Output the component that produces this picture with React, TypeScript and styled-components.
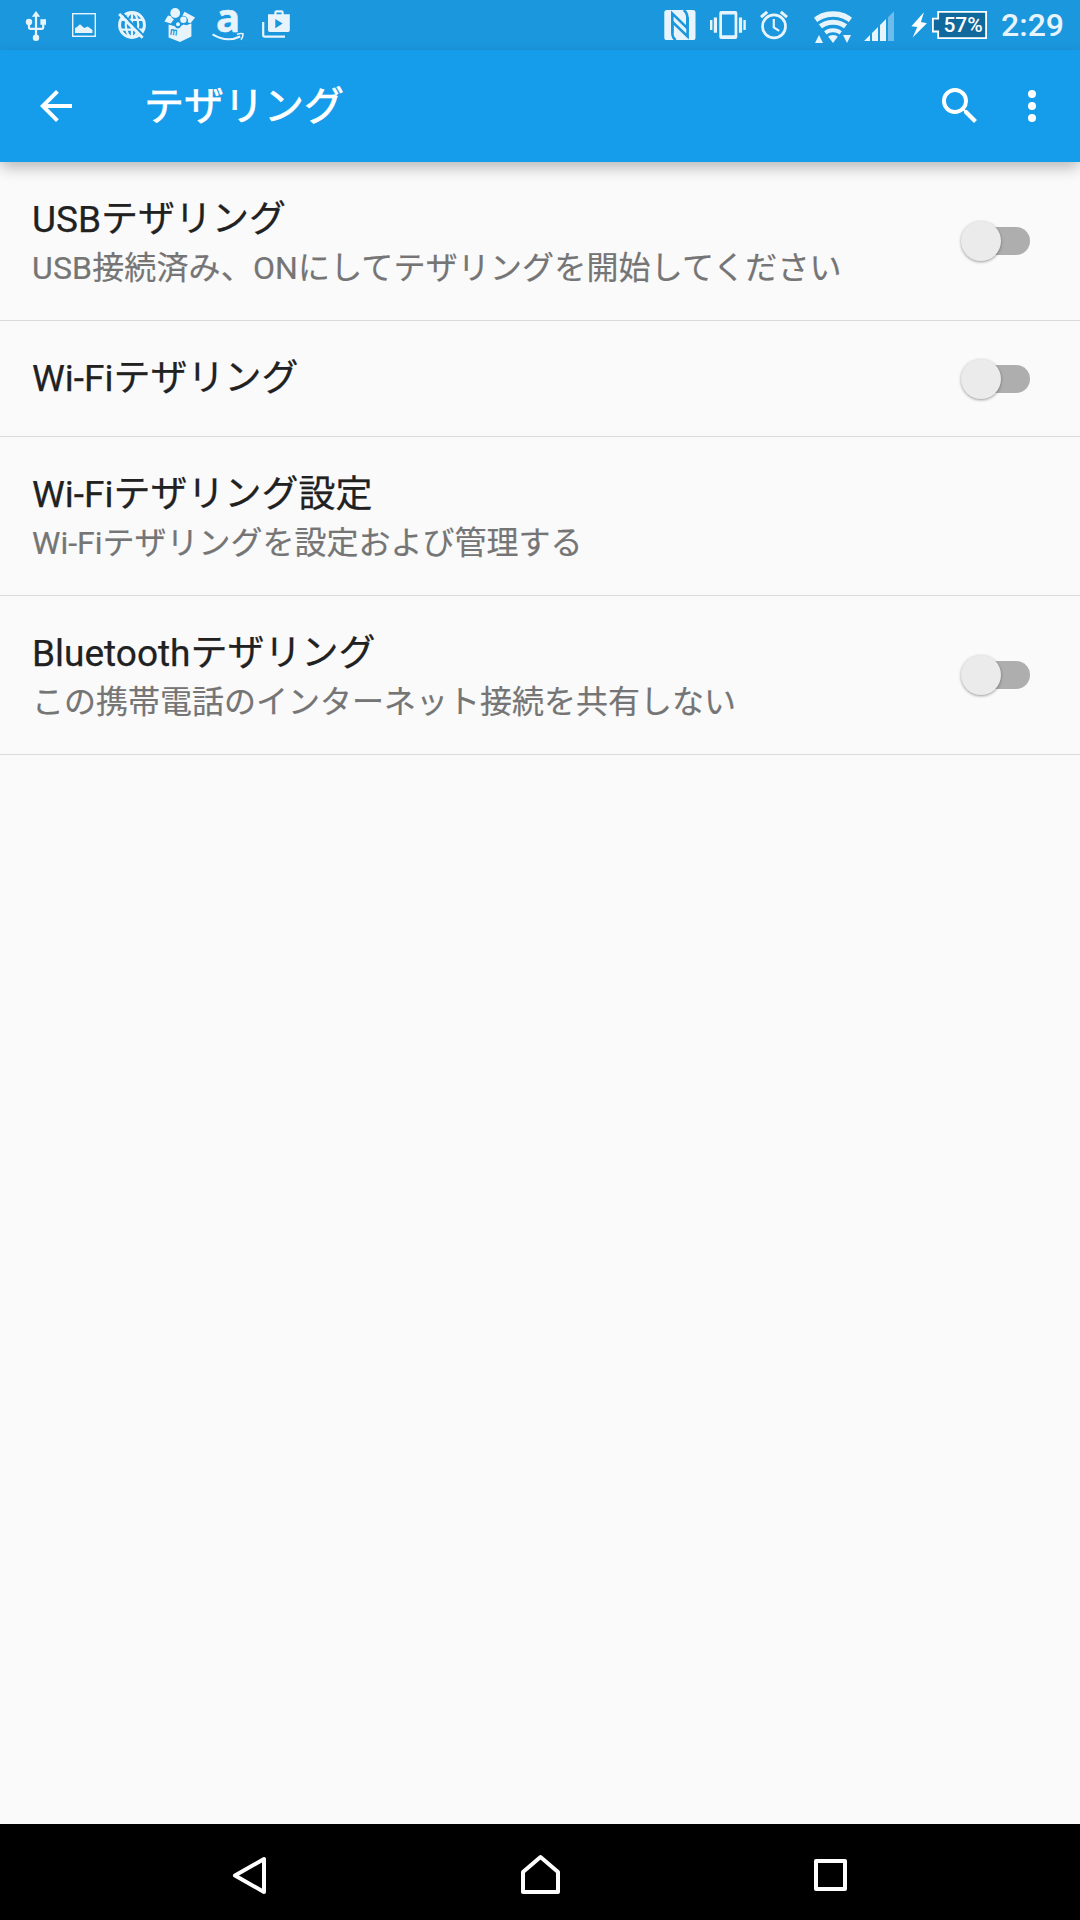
import React from "react";
import styled, { createGlobalStyle } from "styled-components";

const GlobalStyle = createGlobalStyle`
  * { box-sizing: border-box; }
  html, body { margin: 0; padding: 0; background: #fafafa; }
  body { font-family: Roboto, "Noto Sans CJK JP", sans-serif; }
`;

const ICON = "#e8f4fc";
const STATUS_BLUE = "#1b97de";

const Screen = styled.div`
  width: 1080px;
  height: 1920px;
  display: flex;
  flex-direction: column;
  background: #fafafa;
  overflow: hidden;
`;

const StatusBar = styled.header`
  height: 50px;
  flex: none;
  display: flex;
  justify-content: space-between;
  padding: 0 16px 0 20px;
  background: ${STATUS_BLUE};
`;

const StatusGroup = styled.div`
  display: flex;
  align-items: center;
`;

const StatusGlyph = styled.svg<{ $gap?: number }>`
  display: block;
  flex: none;
  height: 50px;
  margin-left: ${(p) => p.$gap ?? 0}px;
  overflow: visible;
`;

const BatteryLabel = styled.text`
  font: 500 21px Roboto, sans-serif;
  fill: #fff;
`;

const LogoLetter = styled.text<{ $size: number }>`
  font: 700 ${(p) => p.$size}px "Open Sans", sans-serif;
`;

const Clock = styled.time`
  margin-left: 12px;
  font-size: 32px;
  font-weight: 500;
  line-height: 50px;
  color: ${ICON};
`;

const Toolbar = styled.div`
  height: 112px;
  flex: none;
  display: flex;
  align-items: center;
  padding: 0 24px 0 32px;
  background: #159ceb;
  color: #fff;
  position: relative;
  z-index: 1;
  box-shadow: 0 6px 14px -1px rgba(0, 0, 0, 0.28);
`;

const ToolbarTitle = styled.h1`
  flex: 1;
  margin: 0 0 0 64px;
  padding-top: 2px;
  font-size: 40px;
  font-weight: 400;
  line-height: 56px;
  -webkit-text-stroke: 0.7px currentColor;
  stroke-linejoin: round;
`;

const ToolbarButton = styled.button<{ $gap?: number }>`
  width: 48px;
  height: 48px;
  margin: 0 0 0 ${(p) => p.$gap ?? 0}px;
  padding: 0;
  border: 0;
  background: none;
  color: inherit;

  svg {
    display: block;
    width: 48px;
    height: 48px;
    fill: currentColor;
  }
`;

const List = styled.main`
  flex: 1;
`;

const Row = styled.section<{ $tall: boolean }>`
  display: flex;
  align-items: center;
  height: ${(p) => (p.$tall ? 159 : 116)}px;
  padding: 0 50px 0 32px;
  border-bottom: 1px solid #dadada;
`;

const RowText = styled.div`
  flex: 1;
  align-self: flex-start;
  padding-top: 34px;
  white-space: nowrap;
`;

const RowTitle = styled.div`
  font-size: 37px;
  line-height: 48px;
  color: #212121;
  -webkit-text-stroke: 0.25px currentColor;
`;

const RowSummary = styled.div<{ $tracking?: number }>`
  margin-top: 2px;
  font-size: 32px;
  line-height: 44px;
  letter-spacing: ${(p) => p.$tracking ?? 0}px;
  color: #757575;
  -webkit-text-stroke: 0.2px currentColor;
`;

const Track = styled.span`
  flex: none;
  display: flex;
  align-items: center;
  width: 62px;
  height: 28px;
  border-radius: 14px;
  background: #aeaeae;
`;

const Thumb = styled.span`
  flex: none;
  width: 40px;
  height: 40px;
  margin-left: -7px;
  border-radius: 50%;
  background: #ebebeb;
  box-shadow: 0 1px 3px rgba(0, 0, 0, 0.38);
`;

const NavBar = styled.nav`
  height: 96px;
  flex: none;
  display: flex;
  justify-content: center;
  gap: 194px;
  background: #000;

  svg {
    display: block;
    width: 96px;
    height: 96px;
    fill: none;
    stroke: #fff;
    stroke-width: 4;
    stroke-linejoin: round;
  }
`;

const UsbIcon = () => (
  <StatusGlyph width="32" viewBox="20 0 32 50" fill={ICON}>
    <path d="M36 11l4.2 5.8h-8.4z" />
    <circle cx="36" cy="37.8" r="3.2" />
    <circle cx="29" cy="22" r="3.2" />
    <path d="M40.4 19.2h5.6v5.6h-5.6z" />
    <path d="M36 15v22M29 23v4.2q0 1.6 1.6 1.6H41.6q1.6 0 1.6-1.6V23" fill="none" stroke={ICON} strokeWidth="2.2" />
  </StatusGlyph>
);

const PictureIcon = () => (
  <StatusGlyph width="32" viewBox="68 0 32 50" $gap={16} fill={ICON}>
    <rect x="72.7" y="13.7" width="22.6" height="22.6" fill="none" stroke={ICON} strokeWidth="1.4" />
    <path d="M75 33v-5l2-1 3-2.8 4.2 3.8 3.6-1.5 4.6 3.5v3z" />
  </StatusGlyph>
);

const GlobeOffIcon = () => (
  <StatusGlyph width="32" viewBox="116 0 32 50" $gap={16} fill="none" stroke={ICON}>
    <circle cx="132" cy="25" r="12.4" strokeWidth="3" />
    <ellipse cx="132" cy="25" rx="6.2" ry="12" strokeWidth="2.2" />
    <path d="M132 13v24M121 19.8h22M120 29.6h24" strokeWidth="2.2" />
    <path d="M121.6 12.4l22.8 24" stroke={STATUS_BLUE} strokeWidth="2.2" />
    <path d="M119.2 14l23.4 23.8" strokeWidth="2.8" />
  </StatusGlyph>
);

const BoxIcon = () => (
  <StatusGlyph width="34" viewBox="162 0 34 50" $gap={14} fill={ICON}>
    <circle cx="175.2" cy="13" r="4.9" />
    <path d="M168 15.4l-3.6 6 6.4 2 3.2-4.2q-2.3-1-3-3z" />
    <path d="M184.5 11.8l10.6 5.6-4.6 5.8-2.800-1a4.800 4.800 0 0 0-5.400-6.400z" />
    <circle cx="183.400" cy="19.800" r="3.200" />
    <circle cx="178" cy="24.200" r="2" />
    <path d="M168.600 24.600l6.200 1.600q1 2.200 3.200 2.200 2.300 0 3.300-2.600l2.300-1.200 2.600.6 5.200-1.600v13L180 42l-11.400-4.600z" />
    <LogoLetter $size={11} x="169.600" y="34.800" fill={STATUS_BLUE} transform="rotate(8 170 34)" textLength="7.600" lengthAdjust="spacingAndGlyphs">m</LogoLetter>
  </StatusGlyph>
);

const AmazonIcon = () => (
  <StatusGlyph width="36" viewBox="210 0 36 50" $gap={14} fill={ICON}>
    <LogoLetter $size={40} x="216" y="31.500" fill={ICON} stroke={ICON} strokeWidth="0.600">a</LogoLetter>
    <path d="M212.600 34.400q14 8.600 27.600 2" fill="none" stroke={ICON} strokeWidth="2.200" />
    <path d="M237 34.400q3.600-1.400 6-.6.3 2.600-2 6" fill="none" stroke={ICON} strokeWidth="1.600" />
  </StatusGlyph>
);

const PlayBagIcon = () => (
  <StatusGlyph width="32" viewBox="260 0 32 50" $gap={14} fill={ICON}>
    <path d="M263.200 22v13q0 1.600 1.600 1.600H285" fill="none" stroke={ICON} strokeWidth="2.200" />
    <path d="M275.400 15v-2.400q0-1.200 1.200-1.200h4.800q1.200 0 1.200 1.200V15" fill="none" stroke={ICON} strokeWidth="2.200" />
    <path fillRule="evenodd" d="M268 14.300h21.800v16q0 1.700-1.700 1.700h-18.400q-1.700 0-1.700-1.700zM275.300 19v9.200l7.400-4.600z" />
  </StatusGlyph>
);

const NfcIcon = () => (
  <StatusGlyph width="34" viewBox="662 0 34 50" fill={ICON}>
    <rect x="664.300" y="10" width="31.200" height="30" rx="2.600" />
    <g fill="none" stroke={STATUS_BLUE} strokeWidth="2.600">
      <path d="M672.300 33V13.600L687.400 28.200V18q0-5-3.600-8" />
      <path d="M687.600 17V36.400L672.300 21.800V33q0 4.600 3.400 7" />
    </g>
  </StatusGlyph>
);

const VibrateIcon = () => (
  <StatusGlyph width="38" viewBox="709 0 38 50" $gap={13} fill={ICON}>
    <path fillRule="evenodd" d="M721.300 11h14q2 0 2 2v24q0 2-2 2h-14q-2 0-2-2V13q0-2 2-2zM722 14.600v20.600h12.600V14.600z" />
    <path d="M713.800 17.500h3.200v15.200h-3.200zM710 20h2.400v10H710zM738.900 17.500h3.200v15.200h-3.200zM743.400 20h2.400v10h-2.400z" />
  </StatusGlyph>
);

const AlarmIcon = () => (
  <StatusGlyph width="30" viewBox="759 0 30 50" $gap={12} fill="none" stroke={ICON}>
    <circle cx="774" cy="26.400" r="11.500" strokeWidth="2.700" />
    <path d="M773.800 19v8.300l5.400 3.500" strokeWidth="2.200" />
    <path d="M761 17.200l6.200-5.400M780.800 11.800l6.200 5.400" strokeWidth="3" />
  </StatusGlyph>
);

const WifiIcon = () => (
  <StatusGlyph width="42" viewBox="812 0 42 50" $gap={23} fill={ICON}>
    <clipPath id="wifi-fan">
      <path d="M833 43L807 8.500h52z" />
    </clipPath>
    <g clipPath="url(#wifi-fan)">
      <circle cx="833" cy="43" r="8" />
      <g fill="none" stroke={ICON} strokeWidth="5">
        <circle cx="833" cy="43" r="12.700" strokeWidth="4" />
        <circle cx="833" cy="43" r="20.800" />
        <circle cx="833" cy="43" r="29" strokeWidth="5.600" />
      </g>
    </g>
    <path d="M815 43l4-8 4 8zM843 35h8l-4 8z" />
  </StatusGlyph>
);

const SignalIcon = () => (
  <StatusGlyph width="32" viewBox="863 0 32 50" $gap={9} fill={ICON}>
    <path d="M864 41l6-6v6zM872 33l6-6v14h-6zM880 25l6-6v22h-6z" />
    <path d="M888 17.200l6-6V41h-6z" opacity="0.400" />
  </StatusGlyph>
);

const BatteryIcon = () => (
  <StatusGlyph width="78" viewBox="911 0 78 50" $gap={16} fill="#fff">
    <path d="M924 12.300l-12.600 13.900 5.900.7-4.700 10.600 14.300-14.300-6-1.200z" />
    <path d="M938.200 11.900h47.900v26.200h-47.900v-6.600h-5.300V18.600h5.300z" fill="#10699c" stroke="#fff" strokeWidth="1.800" />
    <BatteryLabel x="943.400" y="32.300">57%</BatteryLabel>
  </StatusGlyph>
);

type Setting = { title: string; summary?: string; tracking?: number; toggle: boolean };

const settings: Setting[] = [
  { title: "USBテザリング", summary: "USB接続済み、ONにしてテザリングを開始してください", tracking: 0.15, toggle: true },
  { title: "Wi-Fiテザリング", toggle: true },
  { title: "Wi-Fiテザリング設定", summary: "Wi-Fiテザリングを設定および管理する", toggle: false },
  { title: "Bluetoothテザリング", summary: "この携帯電話のインターネット接続を共有しない", toggle: true },
];

export default function App() {
  return (
    <Screen lang="ja">
      <GlobalStyle />
      <StatusBar>
        <StatusGroup>
          <UsbIcon />
          <PictureIcon />
          <GlobeOffIcon />
          <BoxIcon />
          <AmazonIcon />
          <PlayBagIcon />
        </StatusGroup>
        <StatusGroup>
          <NfcIcon />
          <VibrateIcon />
          <AlarmIcon />
          <WifiIcon />
          <SignalIcon />
          <BatteryIcon />
          <Clock>2:29</Clock>
        </StatusGroup>
      </StatusBar>

      <Toolbar>
        <ToolbarButton aria-label="戻る">
          <svg viewBox="0 0 24 24">
            <path d="M20 11H7.830l5.590-5.590L12 4l-8 8 8 8 1.410-1.410L7.830 13H20z" />
          </svg>
        </ToolbarButton>
        <ToolbarTitle>テザリング</ToolbarTitle>
        <ToolbarButton aria-label="検索">
          <svg viewBox="0 0 24 24">
            <path d="M15.500 14h-.79l-.28-.27A6.471 6.471 0 0 0 16 9.500 6.500 6.500 0 1 0 9.500 16c1.610 0 3.090-.59 4.230-1.570l.27.28v.79l5 4.990L20.490 19zm-6 0C7.010 14 5 11.990 5 9.500S7.010 5 9.500 5 14 7.010 14 9.500 11.990 14 9.500 14z" />
          </svg>
        </ToolbarButton>
        <ToolbarButton aria-label="メニュー" $gap={24}>
          <svg viewBox="0 0 24 24">
            <circle cx="12" cy="6" r="2" />
            <circle cx="12" cy="12" r="2" />
            <circle cx="12" cy="18" r="2" />
          </svg>
        </ToolbarButton>
      </Toolbar>

      <List>
        {settings.map((s) => (
          <Row key={s.title} $tall={Boolean(s.summary)}>
            <RowText>
              <RowTitle>{s.title}</RowTitle>
              {s.summary && <RowSummary $tracking={s.tracking}>{s.summary}</RowSummary>}
            </RowText>
            {s.toggle && (
              <Track>
                <Thumb />
              </Track>
            )}
          </Row>
        ))}
      </List>

      <NavBar>
        <svg viewBox="202 0 96 96">
          <path d="M235 51.500L264 35v33z" />
        </svg>
        <svg viewBox="492 0 96 96">
          <path d="M540.500 33L523 48v20h35V48z" />
        </svg>
        <svg viewBox="782 0 96 96">
          <path d="M816 37h29v28h-29z" />
        </svg>
      </NavBar>
    </Screen>
  );
}
